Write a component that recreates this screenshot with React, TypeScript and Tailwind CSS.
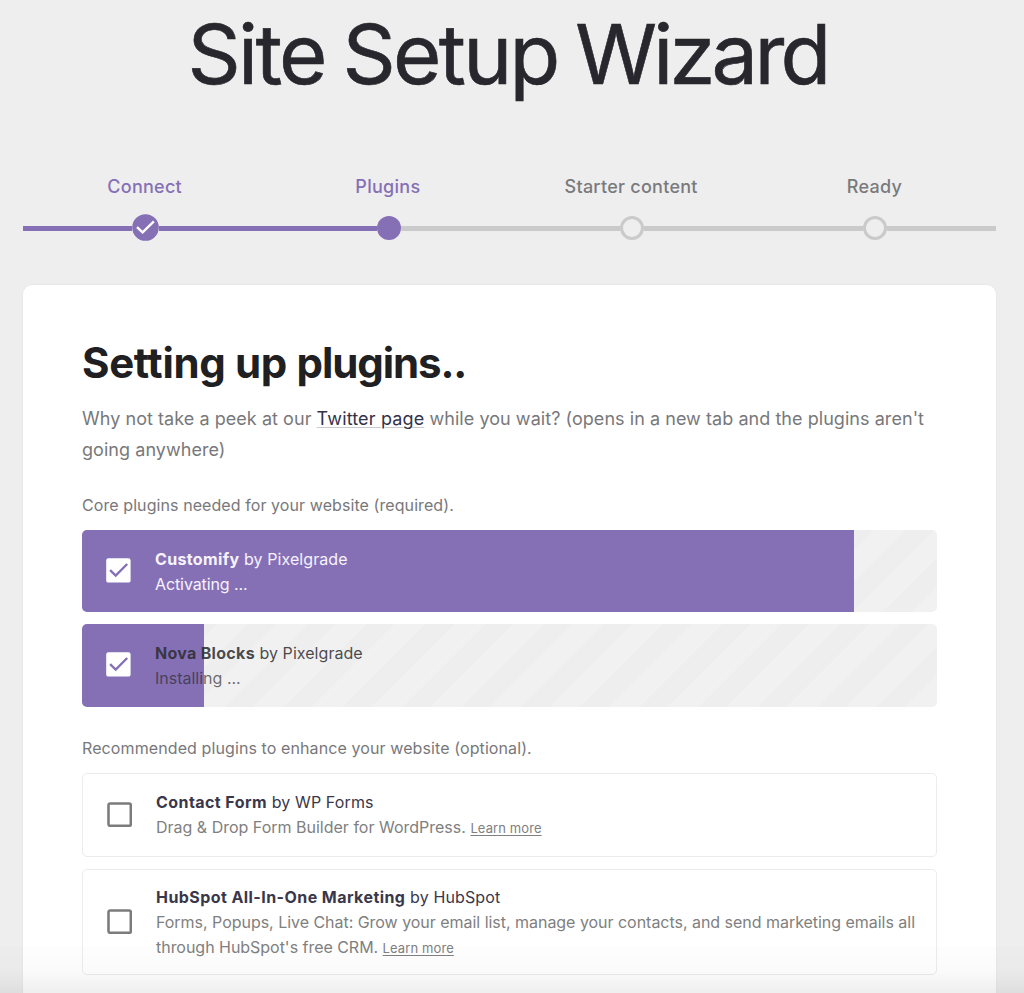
import type { ReactNode } from "react";

type StepState = "done" | "current" | "upcoming";

const steps: { label: string; state: StepState }[] = [
  { label: "Connect", state: "done" },
  { label: "Plugins", state: "current" },
  { label: "Starter content", state: "upcoming" },
  { label: "Ready", state: "upcoming" },
];

function StepMarker({ state }: { state: StepState }) {
  if (state === "done") {
    return (
      <svg className="-mt-px size-[27px] shrink-0" viewBox="0 0 27 27">
        <circle cx="13.5" cy="13.5" r="13.3" fill="#8570b6" />
        <path d="M5 13.2 L10.6 18.4 L21.9 7.3" fill="none" stroke="#fff" strokeWidth="2.4" />
      </svg>
    );
  }
  if (state === "current") {
    return <span className="size-6 shrink-0 rounded-full bg-[#8570b6]" />;
  }
  return <span className="size-6 shrink-0 rounded-full border-[3.5px] border-[#cacaca] bg-[#eeeeee]" />;
}

function Step({ label, state }: (typeof steps)[number]) {
  const active = state !== "upcoming";
  return (
    <li className="flex flex-1 flex-col items-center">
      <span
        className={`h-[26px] text-[18px] leading-[26px] font-medium tracking-[0.27px] whitespace-nowrap ${
          active ? "text-[#8570b6]" : "text-[#7a7a7d]"
        }`}
      >
        {label}
      </span>
      <div className="mt-[14px] flex h-7 w-full items-center">
        <span className={`h-[5px] flex-1 pr-[1.5px] ${active ? "bg-[#8570b6]" : "bg-[#cacaca]"}`} />
        <StepMarker state={state} />
        <span className={`h-[5px] flex-1 ${state === "done" ? "bg-[#8570b6]" : "bg-[#cacaca]"}`} />
      </div>
    </li>
  );
}

function CheckedBox() {
  return (
    <svg className="mb-px ml-6 size-[25px] shrink-0" viewBox="0 0 25 25">
      <rect x="0.2" y="0.2" width="24.4" height="24.4" rx="2.2" fill="#fff" />
      <path d="M4.1 12.2 L9.7 17.5 L21.2 6" fill="none" stroke="#8570b6" strokeWidth="2.4" />
    </svg>
  );
}

function EmptyBox() {
  return (
    <svg className="mb-[2px] ml-6 size-[25px] shrink-0" viewBox="0 0 25 25">
      <rect x="1.5" y="1.5" width="22.3" height="22.3" rx="1.6" fill="none" stroke="#7c7c7c" strokeWidth="2.6" />
    </svg>
  );
}

function LearnMore() {
  return (
    <a href="#" className="text-[13px] tracking-[0.1px] underline underline-offset-[2px]">
      Learn more
    </a>
  );
}

function OptionalPlugin({
  name,
  author,
  height,
  children,
}: {
  name: string;
  author: string;
  height: string;
  children: ReactNode;
}) {
  return (
    <div className={`flex items-center rounded-[5px] border-[1.5px] border-[#ececec] ${height}`}>
      <EmptyBox />
      <div className="mt-px ml-6 text-[16px] leading-[25px] tracking-[-0.03px] text-[#808080]">
        <div className="tracking-[0.12px] text-[#3a374a]">
          <b className="font-bold tracking-[0.43px]">{name}</b> by {author}
        </div>
        {children}
      </div>
    </div>
  );
}

export default function App() {
  return (
    <div className="relative h-[993px] overflow-hidden bg-[#eeeeee] font-['Inter',sans-serif]">
      <h1 className="h-[174px] pt-[4px] pr-[9px] text-center text-[83px] leading-[100px] font-normal tracking-[-2.7px] whitespace-nowrap text-[#27272d] [-webkit-text-stroke:0.6px_#27272d] [word-spacing:-3px]">
        Site Setup <span className="tracking-[-3.8px]">Wizard</span>
      </h1>
      <ol className="mr-7 ml-[23px] flex h-[111px]">
        {steps.map((step) => (
          <Step key={step.label} {...step} />
        ))}
      </ol>

      <main className="mr-7 ml-[23px] flex h-[740px] flex-col rounded-t-[9px] bg-white pr-[59px] pl-[59px] shadow-[0_0_2px_rgba(0,0,0,0.08)]">
        <h2 className="mt-[52px] h-[52px] text-[42px] leading-[52px] font-bold tracking-[-0.35px] whitespace-nowrap text-[#202022]">
          Setting up <span className="tracking-[-1.1px]">plugins..</span>
        </h2>
        <p className="mt-[14px] h-[62px] text-[18px] leading-[31px] tracking-[0.05px] whitespace-nowrap text-[#78787b]">
          Why not take a peek at our{" "}
          <a href="#" className="tracking-[0.15px] text-[#34324a] underline decoration-[#c9c9cf] decoration-1 underline-offset-[2px]">
            Twitter page
          </a>{" "}
          while you wait? (opens in a new tab and the plugins aren't
          <br />
          going anywhere)
        </p>

        <p className="mt-[28px] h-[25px] text-[16px] leading-[25px] tracking-[0.08px] text-[#78787b]">
          Core plugins needed for your website (required).
        </p>
        <div className="mt-[12px] flex h-[82px] overflow-hidden rounded-[5px] bg-[repeating-linear-gradient(135deg,#eeeeee_0,#eeeeee_15.5px,#f1f1f1_15.5px,#f1f1f1_37.3px,#eeeeee_37.3px,#eeeeee_41.93px)]">
          <div className="flex w-[772px] items-center bg-[#8570b6] pb-px">
            <CheckedBox />
            <div className="mt-[2px] ml-6 text-[16px] leading-[25px] text-[#f7f3ff]">
              <div className="tracking-[0.08px]">
                <b className="font-bold tracking-[0.35px]">Customify</b> by Pixelgrade
              </div>
              <div className="tracking-[-0.1px]">Activating ...</div>
            </div>
          </div>
        </div>
        <div className="mt-[12px] flex h-[83px] overflow-hidden rounded-[5px] bg-[repeating-linear-gradient(135deg,#eeeeee_0,#eeeeee_11.6px,#f1f1f1_11.6px,#f1f1f1_33.4px,#eeeeee_33.4px,#eeeeee_41.93px)]">
          <div className="flex w-[122px] items-center bg-[#8570b6] pb-px">
            <CheckedBox />
            <div className="mt-px ml-6 text-[16px] leading-[25px] whitespace-nowrap text-[#2b2b2e]/85">
              <div className="tracking-[0.05px]">
                <b className="font-bold tracking-[0.3px]">Nova Blocks</b> by Pixelgrade
              </div>
              <div className="opacity-80">Installing ...</div>
            </div>
          </div>
        </div>

        <p className="mt-[29px] h-[25px] text-[16px] leading-[25px] tracking-[0.1px] text-[#78787b]">
          Recommended plugins to enhance your website (optional).
        </p>
        <div className="mt-[12px] flex flex-col gap-3">
          <OptionalPlugin name="Contact Form" author="WP Forms" height="h-[84px]">
            <div className="tracking-normal">
              Drag &amp; Drop Form Builder for WordPress. <LearnMore />
            </div>
          </OptionalPlugin>
          <OptionalPlugin name="HubSpot All-In-One Marketing" author="HubSpot" height="h-[106px]">
            <div className="whitespace-nowrap">
              Forms, Popups, Live Chat: Grow your email list, manage your contacts, and send marketing emails all
              <br />
              through HubSpot's free CRM. <LearnMore />
            </div>
          </OptionalPlugin>
        </div>
      </main>
      <div className="pointer-events-none absolute inset-x-0 bottom-0 h-[46px] bg-[linear-gradient(to_bottom,rgba(0,0,0,0.008)_0,rgba(0,0,0,0.015)_50%,rgba(0,0,0,0.065)_100%)]" />
    </div>
  );
}
